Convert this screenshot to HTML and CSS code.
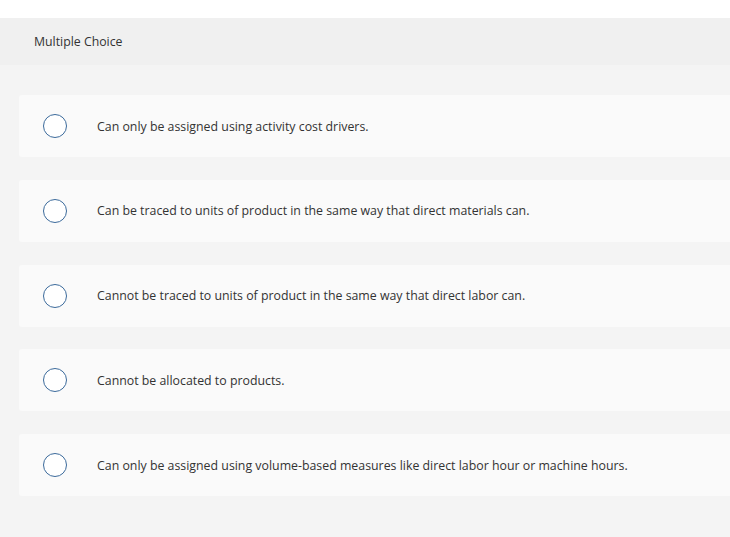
FILE: index.html
```html
<!DOCTYPE html>
<html>
<head>
<meta charset="utf-8">
<link rel="stylesheet" href="styles.css">
</head>
<body>
<div class="page">
  <div class="header">Multiple Choice</div>
  <div class="options">
    <div class="option"><span class="radio"></span><span class="label">Can only be assigned using activity cost drivers.</span></div>
    <div class="option"><span class="radio"></span><span class="label">Can be traced to units of product in the same way that direct materials can.</span></div>
    <div class="option"><span class="radio"></span><span class="label">Cannot be traced to units of product in the same way that direct labor can.</span></div>
    <div class="option"><span class="radio"></span><span class="label">Cannot be allocated to products.</span></div>
    <div class="option"><span class="radio"></span><span class="label">Can only be assigned using volume-based measures like direct labor hour or machine hours.</span></div>
  </div>
</div>
</body>
</html>
```

FILE: styles.css
```css
html, body {
  margin: 0;
  padding: 0;
  background: #ffffff;
  font-family: "Open Sans", "Liberation Sans", sans-serif;
  color: #333333;
}
.page {
  margin-top: 18px;
  background: #f4f4f4;
  height: 519px;
  width: 730px;
  overflow: hidden;
}
.header {
  height: 47px;
  background: #f0f0f0;
  box-sizing: border-box;
  padding-left: 34px;
  display: flex;
  align-items: center;
  font-size: 12.3px;
  color: #333333;
}
.options {
  padding: 30px 0 0 19px;
  display: flex;
  flex-direction: column;
  gap: 22.75px;
}
.option {
  height: 62px;
  background: #fafafa;
  border-radius: 3px 0 0 3px;
  display: flex;
  align-items: center;
  padding-left: 24px;
}
.radio {
  width: 22px;
  height: 22px;
  border: 1.5px solid #3b6a9b;
  border-radius: 50%;
  background: #ffffff;
  flex: none;
}
.label {
  margin-left: 30px;
  font-size: 12.35px;
  color: #333333;
}
```
